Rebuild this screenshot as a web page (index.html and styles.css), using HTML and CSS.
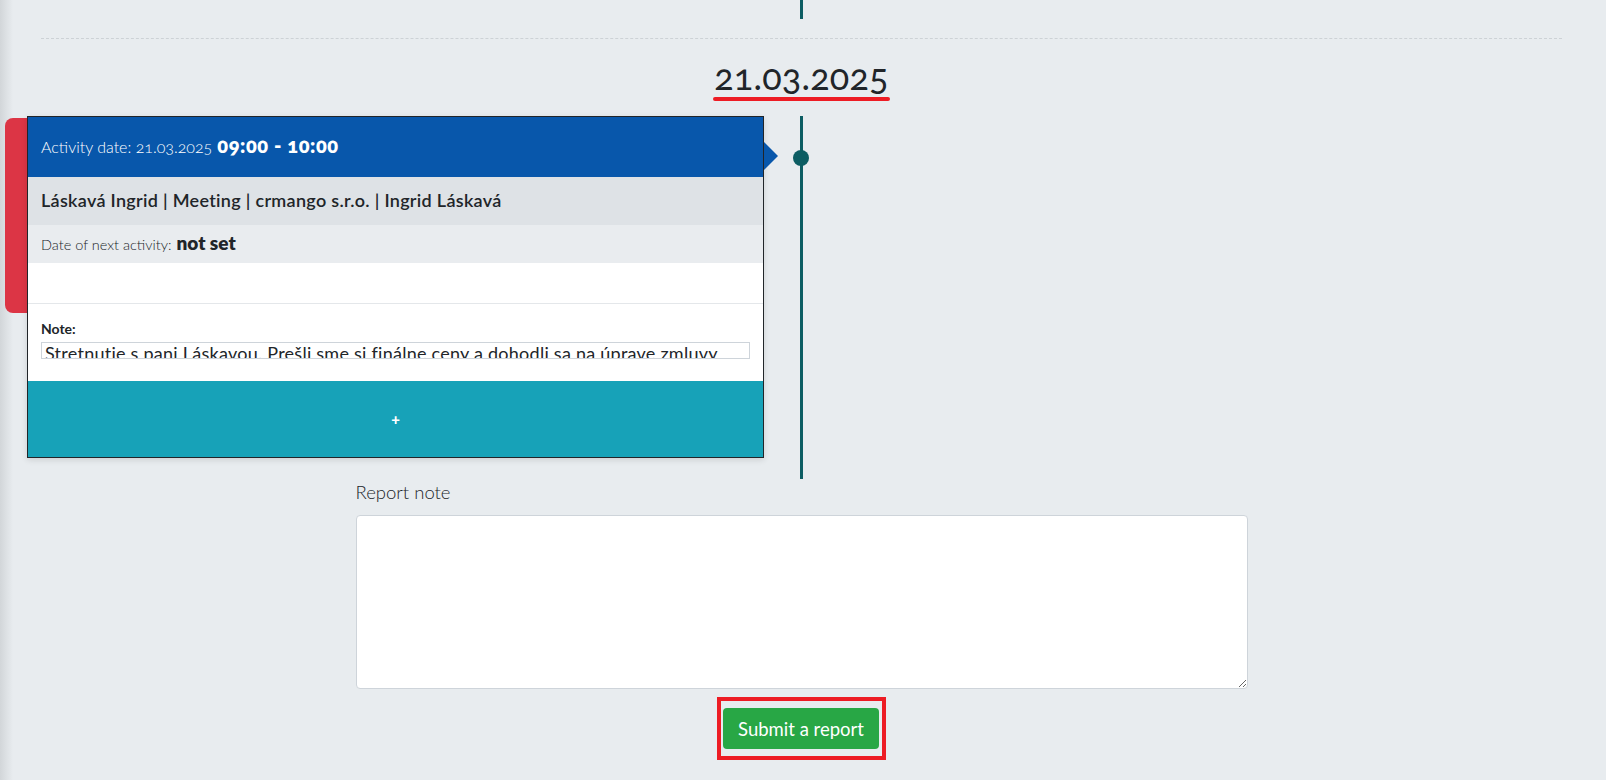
FILE: index.html
```html
<!DOCTYPE html>
<html lang="sk">
<head>
    <meta charset="UTF-8">
    <meta name="viewport" content="width=device-width, initial-scale=1.0">
    <title>Activity report</title>
    <link rel="stylesheet" href="styles.css">
</head>
<body>
    <div class="timeline">
        <div class="axis-stub"></div>
        <div class="separator"></div>

        <div class="day">
            <span class="day-date">21.03.2025</span>
        </div>

        <div class="entry">
            <div class="entry-flag"></div>
            <div class="entry-card">
                <div class="card-head">
                    <span class="head-label">Activity date: 21.03.2025</span>
                    <strong class="head-time">09:00 - 10:00</strong>
                </div>
                <div class="card-title">Láskavá Ingrid | Meeting | crmango s.r.o. | Ingrid Láskavá</div>
                <div class="card-next">
                    <span class="next-label">Date of next activity:</span>
                    <strong class="next-value">not set</strong>
                </div>
                <div class="card-spacer"></div>
                <div class="card-note">
                    <label class="note-label" for="note1">Note:</label>
                    <textarea id="note1" class="note-text" readonly>Stretnutie s pani Láskavou. Prešli sme si finálne ceny a dohodli sa na úprave zmluvy</textarea>
                </div>
                <button class="card-add" type="button">+</button>
            </div>
            <div class="entry-axis">
                <span class="axis-dot"></span>
            </div>
        </div>

        <form class="report">
            <label class="report-label" for="reportNote">Report note</label>
            <textarea id="reportNote" class="report-text"></textarea>
            <div class="report-submit">
                <div class="report-actions">
                    <button type="submit" class="btn-submit">Submit a report</button>
                </div>
            </div>
        </form>
    </div>
</body>
</html>
```

FILE: styles.css
```css
body {
    margin: 0;
    font-family: Lato, "Open Sans", sans-serif;
    font-variant-numeric: oldstyle-nums;
    color: #212529;
    background: linear-gradient(90deg, #d2d6d9 0, #e8ecef 13px) #e8ecef;
}
.timeline {
    padding: 0 44px 0 41px;
}
.axis-stub {
    width: 3px;
    height: 19px;
    margin: 0 auto;
    background-color: #0c5d63;
}
.separator {
    margin-top: 19px;
    border-top: 1px dashed #cdd2d6;
}
.day {
    margin-top: 16px;
    text-align: center;
}
.day-date {
    display: inline-block;
    padding: 0 13px;
    font-size: 36px;
    line-height: 1.2;
    letter-spacing: 0.2px;
}
.day-date::after {
    content: "";
    display: block;
    height: 4px;
    margin: -1px -1px 0;
    border-radius: 2px;
    background-color: #ed1c24;
}

/* Entry on the timeline */
.entry {
    display: flex;
    align-items: flex-start;
    margin: 15px 0 0 -36px;
}
.entry-flag {
    width: 22px;
    height: 195px;
    margin-top: 2px;
    background-color: #dc3545;
    border-radius: 8px 0 0 8px;
}
.entry-card {
    width: 737px;
    box-sizing: border-box;
    border: 1px solid #212529;
    background-color: white;
    box-shadow: 0 2px 6px rgba(0, 0, 0, 0.12);
}
.card-head {
    position: relative;
    display: flex;
    align-items: baseline;
    gap: 5px;
    height: 60px;
    padding: 16px 13px 0;
    box-sizing: border-box;
    background-color: #0857ab;
    color: white;
}
.card-head::after {
    content: "";
    position: absolute;
    top: 25px;
    right: -15px;
    border-left: 14px solid #0857ab;
    border-top: 14px solid transparent;
    border-bottom: 14px solid transparent;
}
.head-label {
    font-size: 16px;
    font-weight: 300;
}
.head-time {
    font-size: 20px;
    font-weight: 800;
    letter-spacing: 0.6px;
}
.card-title {
    display: flex;
    align-items: center;
    height: 48px;
    padding: 0 13px 2px;
    box-sizing: border-box;
    background-color: #dee2e6;
    font-size: 18px;
    font-weight: 600;
    letter-spacing: 0.3px;
}
.card-next {
    display: flex;
    align-items: baseline;
    gap: 5px;
    height: 38px;
    padding: 6px 13px 0;
    box-sizing: border-box;
    background-color: #e9ecef;
}
.next-label {
    font-size: 14.5px;
    font-weight: 300;
}
.next-value {
    font-size: 19px;
    font-weight: 800;
}
.card-spacer {
    height: 40px;
    border-bottom: 1px solid #e4e7ea;
}
.card-note {
    height: 77px;
    padding: 16px 13px 0;
    box-sizing: border-box;
}
.note-label {
    display: block;
    margin-bottom: 5px;
    font-size: 14px;
    font-weight: 700;
    line-height: 17px;
}
.note-text {
    display: block;
    width: 100%;
    height: 17px;
    margin: 0;
    padding: 0 3px;
    box-sizing: border-box;
    border: 1px solid #ced4da;
    font-family: inherit;
    font-size: 18px;
    line-height: 21px;
    letter-spacing: 0.25px;
    color: #212529;
    overflow: hidden;
    resize: none;
    white-space: nowrap;
}
.card-add {
    display: block;
    width: 100%;
    height: 76px;
    border: none;
    background-color: #17a2b8;
    color: white;
    font-family: inherit;
    font-size: 15px;
    font-weight: 900;
    cursor: pointer;
}
.entry-axis {
    position: relative;
    width: 3px;
    min-height: 363px;
    margin-left: 36px;
    background-color: #0c5d63;
}
.axis-dot {
    position: absolute;
    top: 34px;
    left: -7px;
    width: 16px;
    height: 16px;
    border-radius: 50%;
    background-color: #0c5d63;
}

/* Report form */
.report {
    width: 892px;
    margin: 1px auto 0;
}
.report-label {
    display: block;
    margin-bottom: 10px;
    font-size: 18.5px;
    font-weight: 300;
    line-height: 25px;
}
.report-text {
    display: block;
    width: 100%;
    height: 174px;
    margin: 0;
    box-sizing: border-box;
    border: 1px solid #ced4da;
    border-radius: 4px;
    background-color: white;
    font-family: inherit;
    font-size: 16px;
}
.report-submit {
    margin-top: 8px;
    text-align: center;
}
.report-actions {
    display: inline-flex;
    padding: 7px 3px 7px 2px;
    border: 4px solid #ed1c24;
}
.btn-submit {
    height: 41px;
    padding: 0 15px;
    border: none;
    border-radius: 4px;
    background-color: #28a745;
    color: white;
    font-family: inherit;
    font-size: 18.5px;
    cursor: pointer;
}
```
